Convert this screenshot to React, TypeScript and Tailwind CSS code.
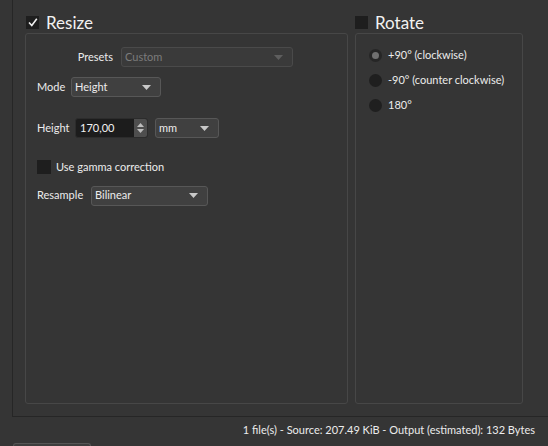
import React from "react";

const font = { fontFamily: 'Lato, "Noto Sans", sans-serif' };

function Arrow({ disabled }: { disabled?: boolean }) {
  return (
    <svg width="9" height="5" viewBox="0 0 9 5" className="shrink-0">
      <path d="M0 0 L9 0 L4.5 5 Z" fill={disabled ? "#5e5e5e" : "#c8c8c8"} />
    </svg>
  );
}

function Combo({
  value,
  width,
  disabled,
}: {
  value: string;
  width: string;
  disabled?: boolean;
}) {
  return (
    <div
      className={`flex h-[20px] items-center justify-between rounded-[3px] border pl-[3px] pr-[9px] ${width} ${
        disabled
          ? "border-[#4a4a4a] bg-[#3a3a3a] text-[#7c7c7c]"
          : "border-[#575757] bg-[#404040] text-[#ececec]"
      }`}
    >
      <span>{value}</span>
      <Arrow disabled={disabled} />
    </div>
  );
}

function Radio({ label, checked }: { label: string; checked?: boolean }) {
  return (
    <div className="flex h-[13px] items-center gap-[6px]">
      <div
        className={`flex h-[13px] w-[13px] items-center justify-center rounded-full ${
          checked ? "bg-[#262626]" : "bg-[#1f1f1f]"
        }`}
      >
        {checked && <div className="h-[7px] w-[7px] rounded-full bg-[#707070]" />}
      </div>
      <span>{label}</span>
    </div>
  );
}

export default function App() {
  return (
    <div
      className="relative h-[446px] w-[548px] overflow-hidden bg-[#353535] text-[11px] text-[#ececec]"
      style={font}
    >
      <div className="ml-[12px] flex h-[417px] gap-[7px] border-b border-l border-[#262626] pl-[12px] pt-[12px]">
        {/* Resize group */}
        <div className="flex w-[323px] flex-col">
          <div className="flex h-[21px] items-center gap-[7px] pl-[1px]">
            <div className="flex h-[13px] w-[13px] items-center justify-center bg-[#1e1e1e]">
              <svg width="10" height="9" viewBox="0 0 10 9">
                <path
                  d="M1 4.5 L3.8 7.5 L8.8 0.8"
                  stroke="#f0f0f0"
                  strokeWidth="1.6"
                  fill="none"
                />
              </svg>
            </div>
            <span className="text-[17px] leading-none text-[#f2f2f2]">Resize</span>
          </div>
          <div className="h-[371px] rounded-[3px] border border-[#474747] pl-[11px] pt-[13px]">
            <div className="flex items-center">
              <span className="w-[84px] pr-[8px] text-right">Presets</span>
              <Combo value="Custom" width="w-[172px]" disabled />
            </div>
            <div className="mt-[10px] flex items-center">
              <span className="w-[34px]">Mode</span>
              <Combo value="Height" width="w-[90px]" />
            </div>
            <div className="mt-[21px] flex items-center">
              <span className="w-[38px]">Height</span>
              <div className="flex h-[20px] w-[73px] overflow-hidden rounded-[3px] border border-[#2c2c2c] bg-[#1c1c1c]">
                <span className="flex-1 pl-[4px] leading-[18px] text-[#f2f2f2]">170,00</span>
                <div className="flex w-[13px] flex-col items-center justify-center gap-[2px] bg-[#4e4e4e]">
                  <svg width="7" height="4" viewBox="0 0 7 4">
                    <path d="M0 4 L7 4 L3.5 0 Z" fill="#bdbdbd" />
                  </svg>
                  <svg width="7" height="4" viewBox="0 0 7 4">
                    <path d="M0 0 L7 0 L3.5 4 Z" fill="#bdbdbd" />
                  </svg>
                </div>
              </div>
              <div className="ml-[7px]">
                <Combo value="mm" width="w-[64px]" />
              </div>
            </div>
            <div className="mt-[21px] flex items-center gap-[5px]">
              <div className="h-[14px] w-[14px] bg-[#1e1e1e]" />
              <span>Use gamma correction</span>
            </div>
            <div className="mt-[10px] flex items-center">
              <span className="w-[54px]">Resample</span>
              <Combo value="Bilinear" width="w-[117px]" />
            </div>
          </div>
        </div>

        {/* Rotate group */}
        <div className="flex w-[168px] flex-col">
          <div className="flex h-[21px] items-center gap-[7px]">
            <div className="h-[13px] w-[13px] bg-[#1e1e1e]" />
            <span className="text-[17px] leading-none text-[#f2f2f2]">Rotate</span>
          </div>
          <div className="flex h-[371px] flex-col gap-[12px] rounded-[3px] border border-[#474747] pl-[13px] pt-[15px]">
            <Radio label="+90° (clockwise)" checked />
            <Radio label="-90° (counter clockwise)" />
            <Radio label="180°" />
          </div>
        </div>
      </div>

      <div className="flex h-[26px] items-center justify-end pr-[13px]">
        <span>1 file(s) - Source: 207.49 KiB - Output (estimated): 132 Bytes</span>
      </div>
      <div className="ml-[13px] h-[10px] w-[78px] rounded-t-[3px] border border-b-0 border-[#555555] bg-[#3d3d3d]" />
    </div>
  );
}
